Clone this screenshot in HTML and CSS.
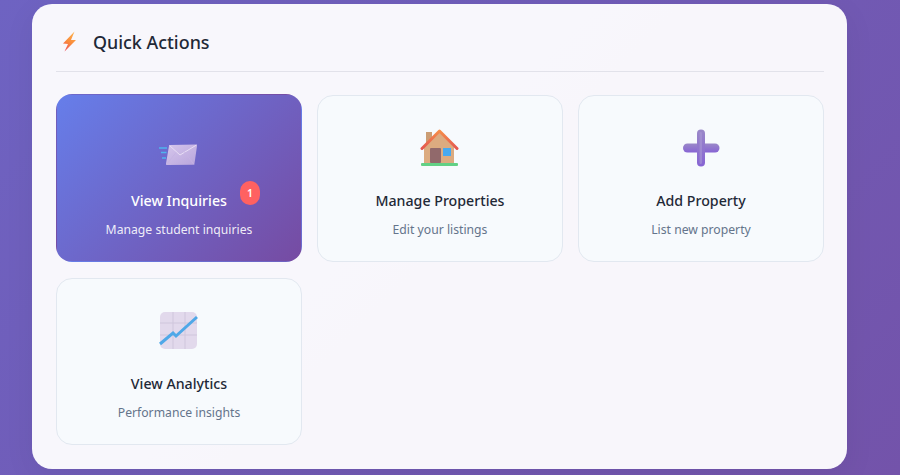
FILE: index.html
```html
<!DOCTYPE html>
<html lang="en">
<head>
    <meta charset="UTF-8">
    <title>Quick Actions</title>
    <meta name="viewport" content="width=device-width, initial-scale=1.0">
    <link rel="stylesheet" href="styles.css">
</head>
<body>
    <section class="panel">
        <header class="panel-header">
            <svg class="bolt" width="20" height="24" viewBox="0 0 20 24">
                <defs>
                    <linearGradient id="boltFill" x1="0.7" y1="0" x2="0.3" y2="1">
                        <stop offset="0" stop-color="#fdb04a"/>
                        <stop offset="0.55" stop-color="#f98a3c"/>
                        <stop offset="1" stop-color="#ee4f5c"/>
                    </linearGradient>
                </defs>
                <path d="M14.500 1.500 L3 13.500 L8 14 L4.500 21.500 L16 10 L11 10 Z" fill="url(#boltFill)"/>
            </svg>
            <h2>Quick Actions</h2>
        </header>
        <div class="actions">
            <a class="action active">
                <span class="icon">
                    <svg width="40" height="40" viewBox="0 0 40 40">
                        <defs>
                            <linearGradient id="mailFill" x1="0" y1="0" x2="1" y2="1">
                                <stop offset="0" stop-color="#d6c7ec"/>
                                <stop offset="1" stop-color="#b8a4dc"/>
                            </linearGradient>
                        </defs>
                        <path d="M0 20h8M2 24.500h5.500M3 30h4" stroke="#4fb4ee" stroke-width="1.500" fill="none"/>
                        <path d="M11 17 L37 16.500 Q38.300 16.500 38 18 L35.500 35.500 Q35.300 36.800 34 36.800 L8 37 Q6.700 37 7 35.500 L10 18 Q10.200 17 11 17 Z" fill="url(#mailFill)"/>
                        <path d="M10.500 17.500 L21 27 L37.500 17" stroke="#e8def5" stroke-width="1" fill="none"/>
                        <path d="M7.500 36.500 L17 24.500M35 36.500 L25.500 24" stroke="#c5b3e2" stroke-width="0.800" fill="none"/>
                    </svg>
                </span>
                <h3>View Inquiries</h3>
                <p>Manage student inquiries</p>
                <span class="badge">1</span>
            </a>
            <a class="action">
                <span class="icon">
                    <svg width="40" height="40" viewBox="0 0 40 40">
                        <defs>
                            <linearGradient id="roofStroke" x1="0" y1="0" x2="0" y2="1">
                                <stop offset="0" stop-color="#f58d4a"/>
                                <stop offset="1" stop-color="#e4574f"/>
                            </linearGradient>
                        </defs>
                        <rect x="6" y="4" width="6" height="14" fill="#cb9d74"/>
                        <path d="M4 19 L19.500 4 L34 19 L34 36 L4 36 Z" fill="#dcab80"/>
                        <path d="M2 20.500 L19.500 3 L37 20.500" stroke="url(#roofStroke)" stroke-width="3" fill="none" stroke-linejoin="round" stroke-linecap="round"/>
                        <rect x="10" y="20" width="11" height="15" rx="1" fill="#91696b"/>
                        <rect x="23" y="20" width="8" height="8" fill="#46a9f0"/>
                        <rect x="1" y="35" width="37" height="3" rx="1" fill="#62d085"/>
                    </svg>
                </span>
                <h3>Manage Properties</h3>
                <p>Edit your listings</p>
            </a>
            <a class="action">
                <span class="icon">
                    <svg width="40" height="40" viewBox="0 0 40 40">
                        <defs>
                            <linearGradient id="plusV" x1="0" y1="0" x2="0" y2="1">
                                <stop offset="0" stop-color="#9a88c8"/>
                                <stop offset="1" stop-color="#8764d4"/>
                            </linearGradient>
                        </defs>
                        <rect x="2" y="15.500" width="36.500" height="9" rx="4.500" fill="url(#plusV)"/>
                        <rect x="16" y="1.500" width="8" height="37" rx="4" fill="url(#plusV)"/>
                        <rect x="18.500" y="4" width="2.500" height="32" rx="1.200" fill="#a898d4" opacity="0.6"/>
                    </svg>
                </span>
                <h3>Add Property</h3>
                <p>List new property</p>
            </a>
            <a class="action">
                <span class="icon">
                    <svg width="40" height="40" viewBox="0 0 40 40">
                        <rect x="1" y="1" width="37" height="37" rx="5" fill="#e2d9ec"/>
                        <path d="M14 1v37M26 1v37M1 12h37M1 24h37" stroke="#cfc6dc" stroke-width="1" fill="none"/>
                        <path d="M1 33 L14 22 L17 25 L38 6" stroke="#4fa8e8" stroke-width="3" fill="none"/>
                    </svg>
                </span>
                <h3>View Analytics</h3>
                <p>Performance insights</p>
            </a>
        </div>
    </section>
</body>
</html>
```

FILE: styles.css
```css
body {
    font-family: "Noto Sans", "Open Sans", sans-serif;
    background: linear-gradient(135deg, #6e63c2 0%, #7353aa 100%);
    height: 475px;
    margin: 0;
    padding: 4px 53px 6px 32px;
    box-sizing: border-box;
    overflow: hidden;
}
.panel {
    height: 465px;
    box-sizing: border-box;
    padding: 16px 23px 24px 24px;
    background-color: rgba(255, 255, 255, 0.95);
    border-radius: 20px;
    box-shadow: 0 8px 32px rgba(0, 0, 0, 0.06);
}
.panel-header {
    display: flex;
    align-items: center;
    gap: 13px;
    height: 52px;
    padding-bottom: 8px;
    box-sizing: border-box;
    border-bottom: 1px solid #e2e2ea;
    margin-bottom: 23px;
}
.panel-header h2 {
    margin: 0;
    font-size: 17.9px;
    font-weight: 500;
    color: #1f2937;
}
.bolt {
    margin-left: 4px;
}
.actions {
    display: grid;
    grid-template-columns: repeat(3, 246px);
    grid-auto-rows: 167px;
    column-gap: 15px;
    row-gap: 16px;
}
.action {
    position: relative;
    display: flex;
    flex-direction: column;
    align-items: center;
    padding-top: 32px;
    box-sizing: border-box;
    background-color: #f7fafd;
    border: 1px solid #e2e8f0;
    border-radius: 16px;
    color: #1f2937;
}
.action h3 {
    margin: 0 0 9px;
    font-size: 14.2px;
    line-height: 20px;
    font-weight: 500;
}
.action p {
    margin: 1px 0 0;
    font-size: 12.2px;
    line-height: 18px;
    color: #64748b;
}
.icon {
    display: block;
    width: 40px;
    height: 40px;
    margin-bottom: 23px;
}
.active {
    margin-top: -1px;
    padding-top: 33px;
    background: linear-gradient(135deg, #667eea 0%, #764ba2 100%);
    border-color: transparent;
    color: #fff;
}
.active p {
    color: rgba(255, 255, 255, 0.9);
}
.badge {
    position: absolute;
    top: 86px;
    right: 41px;
    width: 20px;
    height: 24px;
    border-radius: 10px;
    background-color: #ff6161;
    color: #fff;
    font-size: 10.4px;
    font-weight: 600;
    line-height: 24px;
    text-align: center;
}
```
